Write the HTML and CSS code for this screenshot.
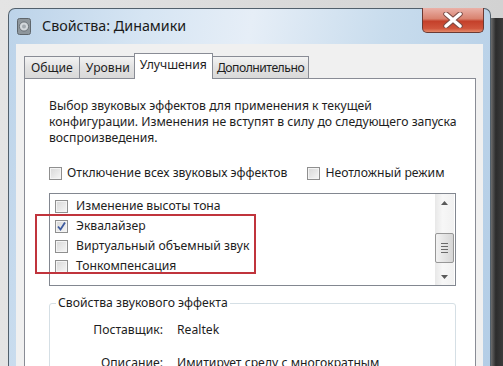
FILE: index.html
```html
<!DOCTYPE html>
<html>
<head>
  <meta charset="UTF-8">
  <title>Свойства: Динамики</title>
  <link rel="stylesheet" href="styles.css">
</head>
<body>
  <div class="screen">
    <div class="window">
      <div class="titlebar">
        <span class="app-icon">
          <svg width="14" height="17" viewBox="0 0 14 17">
            <rect x="0.5" y="0.5" width="13" height="16" rx="2" fill="#8e969c" stroke="#5f666c"/>
            <circle cx="7" cy="8.5" r="4.6" fill="#d3d8dc" stroke="#6c7379"/>
            <circle cx="7" cy="8.5" r="2" fill="#a3aab0"/>
          </svg>
        </span>
        <span class="title">Свойства: Динамики</span>
        <div class="close">
          <svg width="24" height="16" viewBox="0 0 24 16">
            <path d="M5 2 L19 14 M19 2 L5 14" stroke="#7a4a44" stroke-width="5.5" stroke-linecap="round"/>
            <path d="M5 2 L19 14 M19 2 L5 14" stroke="#fff" stroke-width="3.5" stroke-linecap="round"/>
          </svg>
        </div>
      </div>

      <div class="client">
        <div class="tabs">
          <div class="tab">Общие</div>
          <div class="tab">Уровни</div>
          <div class="tab active">Улучшения</div>
          <div class="tab">Дополнительно</div>
        </div>

        <div class="panel">
          <p class="desc">Выбор звуковых эффектов для применения к текущей<br>конфигурации. Изменения не вступят в силу до следующего запуска<br>воспроизведения.</p>

          <div class="options">
            <label class="check"><span class="box"></span>Отключение всех звуковых эффектов</label>
            <label class="check"><span class="box"></span>Неотложный режим</label>
          </div>

          <div class="listbox">
            <ul class="items">
              <li class="check"><span class="box"></span>Изменение высоты тона</li>
              <li class="check"><span class="box checked">
                <svg width="11" height="11" viewBox="0 0 11 11"><path d="M2 5.5 L4.5 8.5 L9 1.5" fill="none" stroke="#3d5a9e" stroke-width="1.8"/></svg>
              </span>Эквалайзер</li>
              <li class="check"><span class="box"></span>Виртуальный объемный звук</li>
              <li class="check"><span class="box"></span>Тонкомпенсация</li>
            </ul>
            <div class="scrollbar">
              <div class="arrow">
                <svg width="7" height="4" viewBox="0 0 7 4"><path d="M0 4 L3.5 0 L7 4 Z" fill="#5a5a5a"/></svg>
              </div>
              <div class="track">
                <div class="thumb">
                  <span class="grip"></span><span class="grip"></span><span class="grip"></span><span class="grip"></span>
                </div>
              </div>
              <div class="arrow">
                <svg width="7" height="4" viewBox="0 0 7 4"><path d="M0 0 L7 0 L3.5 4 Z" fill="#5a5a5a"/></svg>
              </div>
            </div>
            <div class="highlight"></div>
          </div>

          <fieldset class="group">
            <legend>Свойства звукового эффекта</legend>
            <div class="props">
              <span class="prop-label">Поставщик:</span>
              <span>Realtek</span>
              <span class="prop-label">Описание:</span>
              <span>Имитирует среду с многократным</span>
            </div>
          </fieldset>
        </div>
      </div>
    </div>
    <div class="shadow"></div>
  </div>
</body>
</html>
```

FILE: styles.css
```css
html, body {
  margin: 0;
  height: 100%;
  overflow: hidden;
}
body {
  font-family: "Noto Sans", "Open Sans", sans-serif;
  font-size: 12.2px;
  color: #1e1e1e;
  background: linear-gradient(to right, #e4e4e4, #d2d2d2);
}
.screen {
  display: flex;
  height: 100%;
  padding: 8px 0 0 8px;
  box-sizing: border-box;
}
.window {
  width: 483px;
  flex: none;
  box-sizing: border-box;
  border: 1px solid #52606c;
  border-bottom: none;
  border-radius: 7px 7px 0 0;
  background: linear-gradient(100deg, #bcd3e9 0%, #d6e5f3 25%, #e6eef7 45%, #c8dced 70%, #b3cde6 100%);
  padding: 0 7px;
  display: flex;
  flex-direction: column;
}
.shadow {
  flex: 1;
  margin-top: 10px;
  background: linear-gradient(to right, #6d6d6d, #2c2c2c 40%, #3b3b3b);
}

/* заголовок окна */
.titlebar {
  flex: none;
  height: 35px;
  display: flex;
  align-items: flex-start;
}
.app-icon {
  margin: 9px 0 0 1px;
  line-height: 0;
}
.title {
  margin: 7px 0 0 11px;
  font-size: 14.3px;
  line-height: 20px;
  color: #1a1a1a;
}
.close {
  margin: -1px -1px 0 auto;
  width: 62px;
  height: 25px;
  box-sizing: border-box;
  border: 1px solid #6b3a33;
  border-top: none;
  border-radius: 0 0 5px 5px;
  background: linear-gradient(to bottom, #eab1a8 0%, #d9826f 45%, #c4402a 55%, #d0553c 85%, #e48a6b 100%);
  display: flex;
  align-items: center;
  justify-content: center;
}

/* клиентская область */
.client {
  flex: 1;
  min-height: 0;
  background: #f0f0f0;
  padding: 11px 7px 0 8px;
  display: flex;
  flex-direction: column;
}
.tabs {
  flex: none;
  display: flex;
  align-items: flex-end;
  height: 23px;
  position: relative;
  z-index: 1;
}
.tab {
  height: 22px;
  box-sizing: border-box;
  padding: 0 6px;
  border: 1px solid #898c95;
  border-bottom: none;
  margin-right: -1px;
  background: linear-gradient(to bottom, #f3f3f3, #e2e2e2 50%, #d9d9d9);
  line-height: 21px;
}
.tab:last-child {
  padding: 0 4px;
  letter-spacing: -0.5px;
}
.tab.active {
  height: 26px;
  margin: 0 -1px -1px -2px;
  padding: 0 5px;
  background: #fff;
  line-height: 21px;
  position: relative;
}
.panel {
  flex: 1;
  background: #fff;
  border: 1px solid #898c95;
  border-bottom: none;
  padding: 19px 18px 0 24px;
}
.desc {
  margin: 0;
  line-height: 16px;
  white-space: nowrap;
}

/* флажки */
.check {
  display: flex;
  align-items: center;
  gap: 5px;
  line-height: 16px;
  white-space: nowrap;
}
.box {
  width: 13px;
  height: 13px;
  box-sizing: border-box;
  border: 1px solid #8f8f8f;
  background: linear-gradient(135deg, #d7d7d7, #f6f6f6);
  box-shadow: inset 0 0 0 1px #f4f4f4;
  flex: none;
  display: flex;
  align-items: center;
  justify-content: center;
}
.options {
  display: flex;
  gap: 20px;
  margin-top: 19px;
}

/* список эффектов */
.listbox {
  position: relative;
  margin-top: 12px;
  width: 407px;
  height: 93px;
  box-sizing: border-box;
  border: 1px solid #828790;
  display: flex;
}
.items {
  flex: 1;
  list-style: none;
  margin: 0;
  padding: 2px 0 0 5px;
}
.items .check {
  height: 20px;
  gap: 8px;
}
.scrollbar {
  width: 19px;
  margin-right: 1px;
  background: linear-gradient(to right, #e8e8e8, #f7f7f7 40%, #f1f1f1);
  display: flex;
  flex-direction: column;
}
.arrow {
  height: 17px;
  display: flex;
  align-items: center;
  justify-content: center;
}
.track {
  flex: 1;
  padding-top: 22px;
}
.thumb {
  height: 30px;
  box-sizing: border-box;
  border: 1px solid #979797;
  border-radius: 2px;
  background: linear-gradient(to right, #f2f2f2, #e4e4e4 50%, #d6d6d6);
  display: flex;
  flex-direction: column;
  align-items: center;
  justify-content: center;
  gap: 2px;
}
.grip {
  width: 7px;
  height: 1px;
  background: #6a6a6a;
}
.highlight {
  position: absolute;
  left: -15px;
  top: 20px;
  width: 221px;
  height: 60px;
  box-sizing: border-box;
  border: 2px solid #c0343c;
}

/* свойства эффекта */
.group {
  margin: 9px 0 0 0;
  width: 407px;
  box-sizing: border-box;
  border: 1px solid #d5dfe5;
  border-radius: 3px;
  padding: 11px 6px 0 6px;
}
.group legend {
  padding: 0 2px;
  line-height: 16px;
}
.props {
  display: grid;
  grid-template-columns: 107px 1fr;
  column-gap: 14px;
  row-gap: 17px;
  line-height: 16px;
}
.prop-label {
  text-align: right;
}
```
